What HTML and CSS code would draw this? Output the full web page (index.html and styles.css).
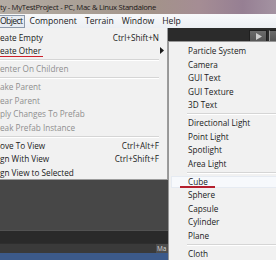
FILE: index.html
```html
<!DOCTYPE html>
<html>
<head>
<meta charset="utf-8">
<link rel="stylesheet" href="styles.css">
</head>
<body>
<div class="titlebar"><span>ty - MyTestProject - PC, Mac &amp; Linux Standalone</span></div>
<div class="menubar">
  <span class="mb-item active">Object</span>
  <span class="mb-item">Component</span>
  <span class="mb-item">Terrain</span>
  <span class="mb-item">Window</span>
  <span class="mb-item">Help</span>
</div>
<div class="workspace">
  <div class="left">
    <div class="menu main">
      <div class="row"><span>eate Empty</span><span class="key">Ctrl+Shift+N</span></div>
      <div class="row marked"><span>eate Other</span><svg class="arrow" width="4" height="7" viewBox="0 0 4 7"><path d="M0 0 L4 3.5 L0 7 Z" fill="#1a1a1a"/></svg></div>
      <div class="sep"></div>
      <div class="row dis"><span>enter On Children</span></div>
      <div class="sep"></div>
      <div class="row dis"><span>ake Parent</span></div>
      <div class="row dis"><span>ear Parent</span></div>
      <div class="row dis"><span>ply Changes To Prefab</span></div>
      <div class="row dis"><span>eak Prefab Instance</span></div>
      <div class="sep"></div>
      <div class="row"><span>ove To View</span><span class="key">Ctrl+Alt+F</span></div>
      <div class="row"><span>gn With View</span><span class="key">Ctrl+Shift+F</span></div>
      <div class="row"><span>gn View to Selected</span></div>
    </div>
    <div class="scene"></div>
    <div class="band1"></div>
    <div class="band2"><span class="tab">Ma</span></div>
    <div class="band3"></div>
  </div>
  <div class="right">
    <div class="toolbar">
      <span class="tbtn play"><svg width="7" height="7" viewBox="0 0 7 7"><path d="M1 0 L7 3.5 L1 7 Z" fill="#cfcfcf"/></svg></span>
      <span class="tbtn next"></span>
    </div>
    <div class="menu sub">
      <div class="row"><span>Particle System</span></div>
      <div class="row"><span>Camera</span></div>
      <div class="row"><span>GUI Text</span></div>
      <div class="row"><span>GUI Texture</span></div>
      <div class="row"><span>3D Text</span></div>
      <div class="sep"></div>
      <div class="row"><span>Directional Light</span></div>
      <div class="row"><span>Point Light</span></div>
      <div class="row"><span>Spotlight</span></div>
      <div class="row"><span>Area Light</span></div>
      <div class="sep"></div>
      <div class="row hover"><span class="cube">Cube</span></div>
      <div class="row"><span>Sphere</span></div>
      <div class="row"><span>Capsule</span></div>
      <div class="row"><span>Cylinder</span></div>
      <div class="row"><span>Plane</span></div>
      <div class="sep"></div>
      <div class="row"><span>Cloth</span></div>
    </div>
  </div>
</div>
</body>
</html>
```
FILE: styles.css
```css
html, body {
  margin: 0;
  padding: 0;
}
body {
  width: 276px;
  height: 260px;
  overflow: hidden;
  background: #474747;
  font-family: "Open Sans", "Noto Sans", sans-serif;
  font-size: 8.2px;
  color: #1a1a1a;
}
.titlebar {
  height: 14px;
  line-height: 14px;
  white-space: nowrap;
  overflow: hidden;
  font-size: 7.7px;
  letter-spacing: -0.3px;
  color: #1c1818;
  background: linear-gradient(90deg, #b4aca4 0%, #aaa096 30%, #a39389 55%, #a58d94 72%, #967f93 88%, #a493a2 100%);
}
.menubar {
  height: 14px;
  display: flex;
  align-items: center;
  background: linear-gradient(#f8f9fb, #eceff3);
  white-space: nowrap;
  font-size: 8.6px;
  overflow: hidden;
}
.mb-item {
  padding: 0 4px;
  line-height: 11px;
}
.mb-item.active {
  padding: 0 1px 0 0;
  margin-right: 1px;
  letter-spacing: -0.6px;
  border: 1px solid #8c99aa;
  border-left: 0;
  background: #e7ecf3;
}
.workspace {
  display: flex;
  height: 232px;
}
.left {
  width: 168px;
  display: flex;
  flex-direction: column;
}
.menu {
  background: #f1f1f1;
  white-space: nowrap;
}
.menu.main {
  padding: 2.5px 8px 0 0;
  border-right: 1px solid #9c9c9c;
  border-bottom: 1px solid #9c9c9c;
  box-shadow: 2px 0 0 #cfcfcf;
}
.row {
  height: 13.5px;
  line-height: 13.5px;
  display: flex;
  justify-content: space-between;
  align-items: center;
  position: relative;
}
.row.dis {
  color: #8f8f8f;
}
.key {
  color: #1a1a1a;
}
.arrow {
  margin-right: -5px;
}
.marked::after {
  content: "";
  position: absolute;
  left: 0;
  top: 11.7px;
  width: 43px;
  height: 1.5px;
  background: #cc1f2a;
}
.sep {
  height: 4.5px;
  display: flex;
  align-items: center;
}
.sep::before {
  content: "";
  flex: 1;
  height: 1px;
  background: #d5d5d5;
  box-shadow: 0 1px 0 #ffffff;
}
.scene {
  flex: 0 0 49.5px;
  background: #474747;
}
.band1 {
  flex: 0 0 13.5px;
  box-sizing: border-box;
  background: #2a2a2a;
  border-top: 1px solid #525252;
}
.band2 {
  flex: 0 0 10px;
  box-sizing: border-box;
  background: #3a3a3a;
  border-top: 1px solid #2e2e2e;
  display: flex;
  justify-content: flex-end;
}
.tab {
  width: 11px;
  background: #4e4e4e;
  color: #d8d8d8;
  font-size: 6.5px;
  line-height: 9px;
  padding-left: 1px;
  overflow: hidden;
}
.band3 {
  flex: 1;
  background: #3c5a8a;
}
.right {
  flex: 1;
  display: flex;
  flex-direction: column;
}
.toolbar {
  height: 13px;
  background: #2b2b2b;
  display: flex;
  justify-content: flex-end;
  align-items: flex-end;
  gap: 2px;
}
.tbtn {
  height: 11px;
  background: linear-gradient(#6c6c6c, #565656);
  border: 1px solid #1f1f1f;
  border-bottom: 0;
  box-sizing: border-box;
  display: flex;
  align-items: center;
  justify-content: center;
}
.play {
  width: 18px;
}
.next {
  width: 7px;
  border-right: 0;
  border-left: 1px solid #9a9a9a;
}
.menu.sub {
  flex: 1;
  border-top: 1px solid #979797;
  border-left: 1px solid #979797;
  padding: 2px 0 0 19px;
}
.menu.sub .sep {
  margin-left: -1px;
}
.hover::before {
  content: "";
  position: absolute;
  left: -17px;
  right: 0;
  top: 1px;
  bottom: 0;
  background: #f7f9fc;
  border: 1px solid #e6ebf2;
  border-right: 0;
}
.cube {
  position: relative;
}
.cube::after {
  content: "";
  position: absolute;
  left: -8px;
  right: -7px;
  bottom: 0.5px;
  height: 1.6px;
  background: #b4202e;
}
```
